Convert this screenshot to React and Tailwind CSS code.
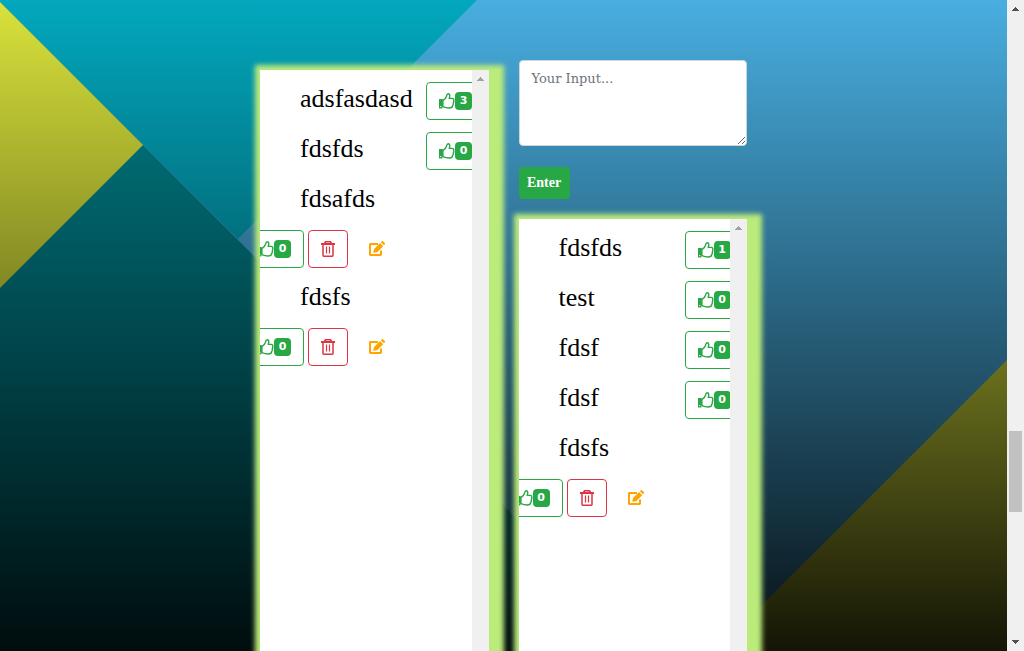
import React from "react";

const leftItems = [
  { text: "adsfasdasd", likes: 3 },
  { text: "fdsfds", likes: 0 },
  { text: "fdsafds", likes: 0, own: true },
  { text: "fdsfs", likes: 0, own: true },
];

const rightItems = [
  { text: "fdsfds", likes: 1 },
  { text: "test", likes: 0 },
  { text: "fdsf", likes: 0 },
  { text: "fdsf", likes: 0 },
  { text: "fdsfs", likes: 0, own: true },
];

function Backdrop() {
  return (
    <svg
      className="absolute inset-0 h-full w-full"
      viewBox="0 0 1007 651"
      preserveAspectRatio="none"
      aria-hidden="true"
    >
      <defs>
        <linearGradient id="shade" x1="0" y1="0" x2="0" y2="1">
          <stop offset="0" stopColor="#000" stopOpacity="0" />
          <stop offset="1" stopColor="#000" stopOpacity="0.91" />
        </linearGradient>
      </defs>
      <rect width="1007" height="651" fill="#48aee0" />
      <path d="M0 0H477L238 239L0 2Z" fill="#02a8be" />
      <path d="M0 2L651 653H0Z" fill="#008690" />
      <path d="M0 2L143 145L0 288Z" fill="#d9e33b" />
      <path d="M1007 360V651H716Z" fill="#d9e33b" />
      <rect width="1007" height="651" fill="url(#shade)" />
    </svg>
  );
}

function ThumbIcon() {
  return (
    <svg width="16" height="16" viewBox="0 0 16 16" fill="none" aria-hidden="true">
      <path d="M0 6H3.8V13.4L3.2 15.6H0Z" fill="currentColor" />
      <circle cx="1.7" cy="13.6" r="0.7" fill="#fff" />
      <path
        d="M3.9 7.6C6 6.2 7 5 7.5 3.2C7.9 1.6 8.2 .8 9.2 .8C10.6 .8 11 2.2 10.7 3.6L10.2 5.4H13.2C14.6 5.4 15.1 6.4 14.7 7.4C15 8.4 14.8 9.3 14.3 10C14.5 11 14.3 11.8 13.7 12.4C13.6 14.4 12.4 15 10 15C7.4 15 5.8 14.4 3.9 13.6Z"
        stroke="currentColor"
        strokeWidth="1.4"
        strokeLinejoin="round"
      />
    </svg>
  );
}

function TrashIcon() {
  return (
    <svg width="14" height="16" viewBox="0 0 14 16" fill="none" stroke="currentColor" aria-hidden="true">
      <path d="M3.5 2.5L4.5 .8H9.5L10.5 2.5" strokeWidth="1.6" />
      <path d="M0 3H14" strokeWidth="2" />
      <path d="M2 4V14.5Q2 15.2 2.7 15.2H11.3Q12 15.2 12 14.5V4" strokeWidth="1.5" />
      <path d="M5.5 5.5V12.5M8.5 5.5V12.5" strokeWidth="1.2" />
    </svg>
  );
}

function EditIcon() {
  return (
    <svg width="16" height="16" viewBox="0 0 16 16" fill="none" aria-hidden="true">
      <path
        d="M9 3H1.4Q1 3 1 3.4V13.6Q1 14 1.4 14H11.6Q12 14 12 13.6V9.5"
        stroke="currentColor"
        strokeWidth="2"
      />
      <path
        d="M4.2 11.8L5 8L11 2L14.2 5.2L8.2 11.2ZM11.8 1.2L12.8 .3Q13.4 -.2 14 .3L15.8 2.1Q16.3 2.7 15.8 3.3L14.9 4.3Z"
        fill="currentColor"
      />
    </svg>
  );
}

function LikeButton({ likes }) {
  return (
    <button
      type="button"
      aria-label={`Like, ${likes}`}
      className="flex h-[38px] shrink-0 items-center rounded border border-[#28a745] bg-white px-3 text-[#28a745]"
    >
      <ThumbIcon />
      <span className="flex h-[18px] w-[17px] items-center justify-center rounded bg-[#28a745] font-['DejaVu_Sans',sans-serif] text-[11px] font-bold text-white">
        {likes}
      </span>
    </button>
  );
}

function Item({ item }) {
  return (
    <li>
      <div className="flex h-[38px] items-center">
        <span className="w-[126px] shrink-0 pb-1 text-[26px] leading-8 text-black">{item.text}</span>
        {!item.own && <LikeButton likes={item.likes} />}
      </div>
      {item.own && (
        <div className="mt-[10px] -ml-[55px] flex items-center gap-1">
          <LikeButton likes={item.likes} />
          <button
            type="button"
            aria-label="Delete"
            className="flex h-[38px] w-10 items-center justify-center rounded border border-[#dc3545] bg-white text-[#dc3545]"
          >
            <TrashIcon />
          </button>
          <button type="button" aria-label="Edit" className="flex h-[38px] w-[50px] items-center justify-center text-[#ffa500]">
            <EditIcon />
          </button>
        </div>
      )}
    </li>
  );
}

function Arrow({ className, down }) {
  return (
    <svg
      width="7"
      height="4"
      viewBox="0 0 7 4"
      className={className}
      fill="currentColor"
      shapeRendering="crispEdges"
      aria-hidden="true"
    >
      <path d={down ? "M0 0H7V1H6V2H5V3H4V4H3V3H2V2H1V1H0Z" : "M3 0H4V1H5V2H6V3H7V4H0V3H1V2H2V1H3Z"} />
    </svg>
  );
}

function Panel({ items, className }) {
  return (
    <section className={`flex bg-white shadow-[5px_5px_5px_10px_#bbeb7b] ${className}`}>
      <ul className="flex min-w-0 flex-1 flex-col gap-3 overflow-hidden pt-3 pl-10">
        {items.map((item, i) => (
          <Item key={i} item={item} />
        ))}
      </ul>
      <div className="flex w-[17px] shrink-0 justify-center bg-[#f0f0f0] pt-[7px]">
        <Arrow className="text-[#a3a3a3]" />
      </div>
    </section>
  );
}

export default function App() {
  return (
    <div className="flex h-screen overflow-hidden font-['Liberation_Serif',serif]">
      <main className="relative min-w-0 flex-1 overflow-hidden">
        <Backdrop />
        <div className="relative mx-auto grid h-full max-w-[487px] grid-cols-2 gap-[30px]">
          <div className="flex flex-col pt-[70px]">
            <Panel items={leftItems} className="flex-1" />
          </div>
          <div className="flex flex-col items-start pt-[60px]">
            <textarea
              aria-label="Your Input"
              placeholder="Your Input..."
              className="block h-[86px] w-full shrink-0 rounded border border-[#ced4da] bg-white px-3 py-1.5 font-['DejaVu_Serif',serif] text-[13px] leading-6 placeholder:text-[#6c757d]"
            />
            <button
              type="button"
              className="mt-[21px] h-8 min-w-[51px] shrink-0 rounded bg-[#28a745] px-2 text-sm font-bold text-white"
            >
              Enter
            </button>
            <Panel items={rightItems} className="mt-5 w-full flex-1" />
          </div>
        </div>
      </main>
      <div className="flex w-[17px] shrink-0 flex-col items-center bg-[#f0f0f0] py-[7px] text-[#505050]">
        <Arrow />
        <div className="flex-[420]" />
        <div className="h-[81px] w-[13px] bg-[#c1c1c1]" />
        <div className="flex-[128]" />
        <Arrow down />
      </div>
    </div>
  );
}
